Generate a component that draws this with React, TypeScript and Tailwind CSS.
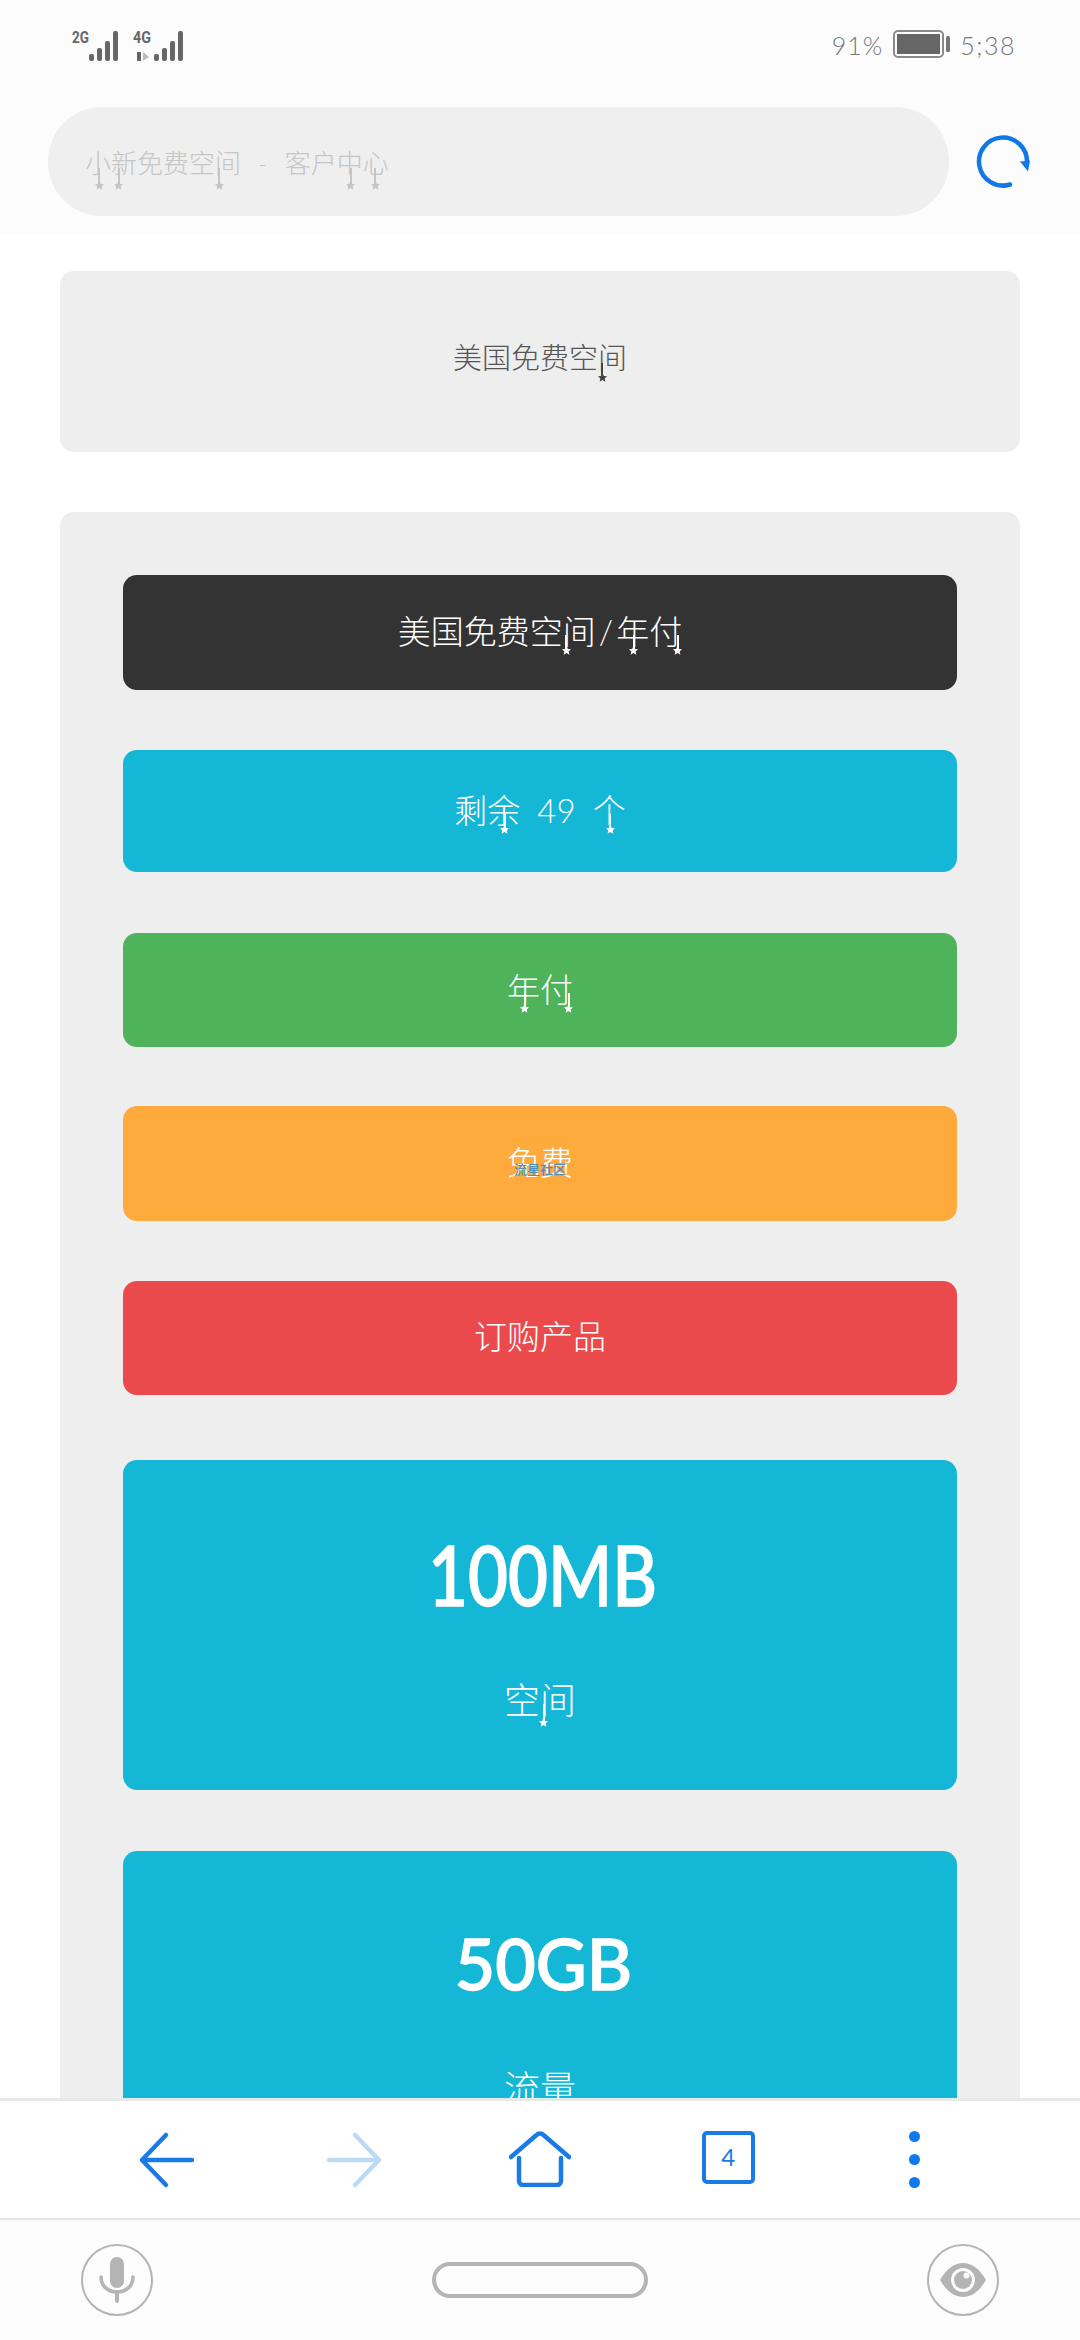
const base = "font-['Lato','Noto_Sans_CJK_SC',sans-serif]";

function Tail({ ch, x = 50, len = 18, top = 62, color = "#ffffff" }: { ch: string; x?: number; len?: number; top?: number; color?: string }) {
  return (
    <span className="relative inline-block">
      {ch}
      <span className="absolute" style={{ left: `${x}%`, top: `${top}%` }}>
        <span className="absolute left-0 top-0 w-[2px]" style={{ height: len, background: color }} />
        <svg width="9" height="9" viewBox="0 0 10 10" className="absolute left-[-3.5px]" style={{ top: len - 3 }}>
          <path d="M5 0l1.5 3.3 3.5.4-2.6 2.3.8 3.6L5 7.8 1.8 9.6l.8-3.6L0 3.7l3.5-.4z" fill={color} />
        </svg>
      </span>
    </span>
  );
}

function Bar({ className, children }: { className: string; children: React.ReactNode }) {
  return (
    <div className={`flex items-center justify-center rounded-[14px] text-[33px] font-light leading-none text-white ${className}`}>
      <span className="relative">{children}</span>
    </div>
  );
}

export default function App() {
  return (
    <div className={`relative flex h-[2340px] w-[1080px] flex-col overflow-hidden bg-white ${base}`}>
      {/* status + address */}
      <header className="flex h-[234px] shrink-0 flex-col bg-[#fcfcfc]">
        <div className="flex h-[107px] items-start justify-between pl-[72px] pr-[64px] pt-[28px]">
          <svg width="114" height="36" viewBox="0 0 114 36">
            <g fill="#666">
              <rect x="17" y="26" width="5" height="7" rx="2" />
              <rect x="25" y="20" width="5" height="13" rx="2" />
              <rect x="33" y="13" width="5" height="20" rx="2" />
              <rect x="41" y="3" width="5" height="30" rx="2" />
              <rect x="82" y="26" width="5" height="7" rx="2" />
              <rect x="90" y="20" width="5" height="13" rx="2" />
              <rect x="98" y="13" width="5" height="20" rx="2" />
              <rect x="106" y="3" width="5" height="30" rx="2" />
              <rect x="65" y="24" width="4" height="9" />
            </g>
            <path d="M71 24l6 5-6 4z" fill="#bbb" />
            <text x="0" y="15" fontSize="17" fontWeight="700" fill="#666" fontFamily="Roboto, sans-serif" textLength="17" lengthAdjust="spacingAndGlyphs">2G</text>
            <text x="61" y="15" fontSize="17" fontWeight="700" fill="#666" fontFamily="Roboto, sans-serif" textLength="18" lengthAdjust="spacingAndGlyphs">4G</text>
          </svg>
          <div className="flex items-center pt-[2px] text-[25px] font-light leading-none text-[#777]">
            <span className="tracking-[1px]">91%</span>
            <svg width="58" height="30" viewBox="0 0 58 30" className="ml-[10px]">
              <rect x="1" y="1" width="49" height="26" rx="4" fill="none" stroke="#8a8a8a" strokeWidth="2" />
              <rect x="4" y="4" width="43" height="20" fill="#666" />
              <rect x="53" y="6" width="4" height="16" rx="1.5" fill="#777" />
            </svg>
            <span className="ml-[9px] tracking-[1.5px]">5;38</span>
          </div>
        </div>
        <div className="flex items-center pl-[48px]">
          <div className="flex h-[109px] w-[901px] items-center rounded-[54px] bg-[#efefef] pl-[37px] pt-[3px] text-[26px] font-light text-[#c6c6c6]">
            <Tail ch="小" color="#c4c4c4" len={16} />
            <Tail ch="新" color="#c4c4c4" len={16} x={25} />
            免费空
            <Tail ch="间" color="#c4c4c4" len={16} x={12} />
            <span className="mx-[17px]">-</span>
            客户
            <Tail ch="中" color="#c4c4c4" len={16} />
            <Tail ch="心" color="#c4c4c4" len={16} x={45} />
          </div>
          <svg width="56" height="56" viewBox="0 0 56 56" className="ml-[26px]">
            <path d="M35 50.5A24 24 0 1 1 52 28" fill="none" stroke="#0f7ae5" strokeWidth="4.5" strokeLinecap="round" />
            <path d="M45 27.5l10-1-2 11z" fill="#0f7ae5" />
          </svg>
        </div>
      </header>

      {/* main */}
      <main className="flex flex-col items-center px-[60px] pt-[37px]">
        <div className="flex h-[181px] w-full items-center justify-center rounded-[14px] bg-[#eeeeee] pb-[8px] text-[29px] font-light text-[#555]">
          <span>
            美国免费空<Tail ch="间" color="#444" x={12} len={13} />
          </span>
        </div>
        <div className="mt-[60px] flex w-full flex-col rounded-[14px] bg-[#eeeeee] px-[63px] pt-[63px]">
          <Bar className="h-[115px] bg-[#333333] pb-[2px]">
            美国免费空<Tail ch="间" x={8} len={14} /><span className="mx-[3px]">/</span><Tail ch="年" len={14} />
            <Tail ch="付" x={84} len={14} />
          </Bar>
          <Bar className="mt-[60px] h-[122px] bg-[#15b7d6] pb-[2px]">
            剩<Tail ch="余" len={14} />
            <span className="mx-[17px]">49</span>
            <Tail ch="个" len={14} />
          </Bar>
          <Bar className="mt-[61px] h-[114px] bg-[#4eb35a] pb-[1px]">
            <Tail ch="年" len={14} />
            <Tail ch="付" x={84} len={14} />
          </Bar>
          <Bar className="mt-[59px] h-[115px] bg-[#ffaa3c] pb-[2px]">
            免费
            <span className="absolute left-1/2 top-[17px] -translate-x-1/2 whitespace-nowrap text-[13px] font-medium text-[#4a90c0]">
              流星社区
            </span>
          </Bar>
          <Bar className="mt-[60px] h-[114px] bg-[#ea4a4c] pb-[3px]">订购产品</Bar>
          <div className="mt-[65px] flex h-[330px] flex-col items-center rounded-[14px] bg-[#15b7d6] pt-[72px] text-white">
            <div className="translate-x-[3px] scale-x-[0.82] text-[84px] font-medium leading-none [-webkit-text-stroke:1.5px_white]">100MB</div>
            <div className="mt-[66px] text-[36px] font-light leading-none">
              空<Tail ch="间" x={8} len={17} />
            </div>
          </div>
          <div className="mt-[61px] flex h-[330px] flex-col items-center rounded-[14px] bg-[#15b7d6] pt-[75px] text-white">
            <div className="translate-x-[3px] scale-x-[0.97] text-[72px] font-medium leading-none [-webkit-text-stroke:1.5px_white]">50GB</div>
            <div className="mt-[72px] text-[36px] font-light leading-none">流量</div>
          </div>
        </div>
      </main>

      {/* bottom browser + nav bars */}
      <div className="absolute bottom-0 left-0 w-full">
        <div className="flex h-[120px] items-center border-t-[3px] border-[#e6e9ea] bg-white">
          <div className="grid w-full grid-cols-5 px-[72px]">
            <div className="flex justify-center">
              <svg width="58" height="58" viewBox="0 0 58 58"><path d="M55 29H5M29 4L5 29l24 25" fill="none" stroke="#1a7be6" strokeWidth="4.5" strokeLinecap="round" strokeLinejoin="round" /></svg>
            </div>
            <div className="flex justify-center">
              <svg width="58" height="58" viewBox="0 0 58 58" className="translate-x-[2px]"><path d="M3 29h50M29 4l24 25-24 25" fill="none" stroke="#bcd9f8" strokeWidth="4.5" strokeLinecap="round" strokeLinejoin="round" /></svg>
            </div>
            <div className="flex justify-center">
              <svg width="62" height="56" viewBox="0 0 62 56"><path d="M2 26L27.500 4a5 5 0 0 1 7 0L60 26M10 27v23a4 4 0 0 0 4 4h34a4 4 0 0 0 4-4V27" fill="none" stroke="#1a7be6" strokeWidth="4.5" strokeLinecap="round" strokeLinejoin="round" /></svg>
            </div>
            <div className="flex justify-center">
              <div className="flex size-[53px] translate-x-[1px] items-center justify-center rounded-[5px] border-[4px] border-[#1a7be6] text-[24px] font-normal text-[#1a7be6]">4</div>
            </div>
            <div className="flex flex-col items-center justify-center gap-[12px]">
              <span className="size-[11px] rounded-full bg-[#0f7af0]" />
              <span className="size-[11px] rounded-full bg-[#0f7af0]" />
              <span className="size-[11px] rounded-full bg-[#0f7af0]" />
            </div>
          </div>
        </div>
        <div className="flex h-[122px] items-center justify-between border-t-[2px] border-[#e6e6e6] bg-[#fcfcfc] px-[81px]">
          <div className="flex size-[72px] items-center justify-center rounded-full border-[2px] border-[#b4b4b4]">
            <svg width="36" height="48" viewBox="0 0 36 48">
              <rect x="11" y="1" width="14" height="31" rx="7" fill="#b4b4b4" />
              <path d="M2 21c0 9 7 15 16 15s16-6 16-15" fill="none" stroke="#b4b4b4" strokeWidth="3.500" strokeLinecap="round" />
              <path d="M18 36v9" stroke="#b4b4b4" strokeWidth="4" strokeLinecap="round" />
            </svg>
          </div>
          <div className="h-[36px] w-[216px] rounded-[18px] border-[4px] border-[#b4b4b4]" />
          <div className="flex size-[72px] items-center justify-center rounded-full border-[2px] border-[#b4b4b4]">
            <svg width="48" height="36" viewBox="0 0 48 36">
              <path d="M1 18C8 6 16 1 24 1s16 5 23 17c-7 12-15 17-23 17S8 30 1 18z" fill="#b4b4b4" />
              <circle cx="24" cy="18" r="12" fill="#fcfcfc" />
              <circle cx="24" cy="18" r="9" fill="#b4b4b4" />
              <circle cx="27.5" cy="13.5" r="3" fill="#fcfcfc" />
            </svg>
          </div>
        </div>
      </div>
    </div>
  );
}
